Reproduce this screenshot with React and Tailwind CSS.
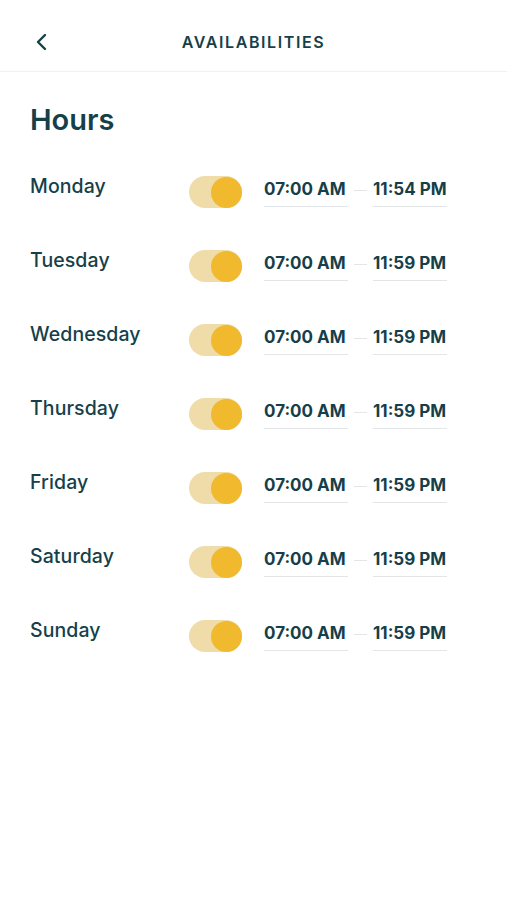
const days = [
  { name: "Monday", from: "07:00 AM", to: "11:54 PM" },
  { name: "Tuesday", from: "07:00 AM", to: "11:59 PM" },
  { name: "Wednesday", from: "07:00 AM", to: "11:59 PM" },
  { name: "Thursday", from: "07:00 AM", to: "11:59 PM" },
  { name: "Friday", from: "07:00 AM", to: "11:59 PM" },
  { name: "Saturday", from: "07:00 AM", to: "11:59 PM" },
  { name: "Sunday", from: "07:00 AM", to: "11:59 PM" },
];

function Toggle() {
  return (
    <div className="w-[53px] h-[32px] rounded-full bg-[#efdca9] flex items-center justify-end">
      <div className="w-[31px] h-[31px] rounded-full bg-[#f0b92e]"></div>
    </div>
  );
}

function DayRow({ day }) {
  return (
    <div className="flex items-start h-[74px]">
      <div className="w-[159px] mt-[2px] text-[19.5px] font-medium tracking-[0.005em] leading-none whitespace-nowrap text-[#163f4a]">
        {day.name}
      </div>
      <div className="mt-[1px]">
        <Toggle />
      </div>
      <div className="flex items-start ml-[22px] mt-[6px]">
        <div className="w-[84px] border-b border-[#e3e6e8] pb-[8px] text-[17px] font-bold whitespace-nowrap text-[#163f4a] leading-none">
          {day.from}
        </div>
        <div className="w-[13px] h-px bg-[#e3e6e8] mx-[6px] mt-[9px]"></div>
        <div className="w-[74px] border-b border-[#e3e6e8] pb-[8px] text-[17px] font-bold whitespace-nowrap text-[#163f4a] leading-none">
          {day.to}
        </div>
      </div>
    </div>
  );
}

export default function App() {
  return (
    <div className="w-[507px] h-[900px] bg-white font-['Inter',sans-serif]">
      <div className="h-[72px] border-b border-[#f0f1f2] flex items-center px-[34px] pt-[13px] relative">
        <svg width="16" height="18" viewBox="0 0 16 18" className="text-[#163f4a]">
          <path d="M11 2 L4 9 L11 16" fill="none" stroke="currentColor" strokeWidth="2.4" strokeLinecap="round" strokeLinejoin="round" />
        </svg>
        <div className="absolute inset-0 pt-[13px] flex items-center justify-center pointer-events-none">
          <span className="text-[16px] font-semibold tracking-[0.1em] text-[#163f4a]">
            AVAILABILITIES
          </span>
        </div>
      </div>
      <div className="px-[30px] pt-[33px]">
        <h1 className="text-[29px] font-semibold text-[#163f4a] leading-none mb-[41px]">Hours</h1>
        <div className="flex flex-col">
          {days.map((d) => (
            <DayRow key={d.name} day={d} />
          ))}
        </div>
      </div>
    </div>
  );
}
